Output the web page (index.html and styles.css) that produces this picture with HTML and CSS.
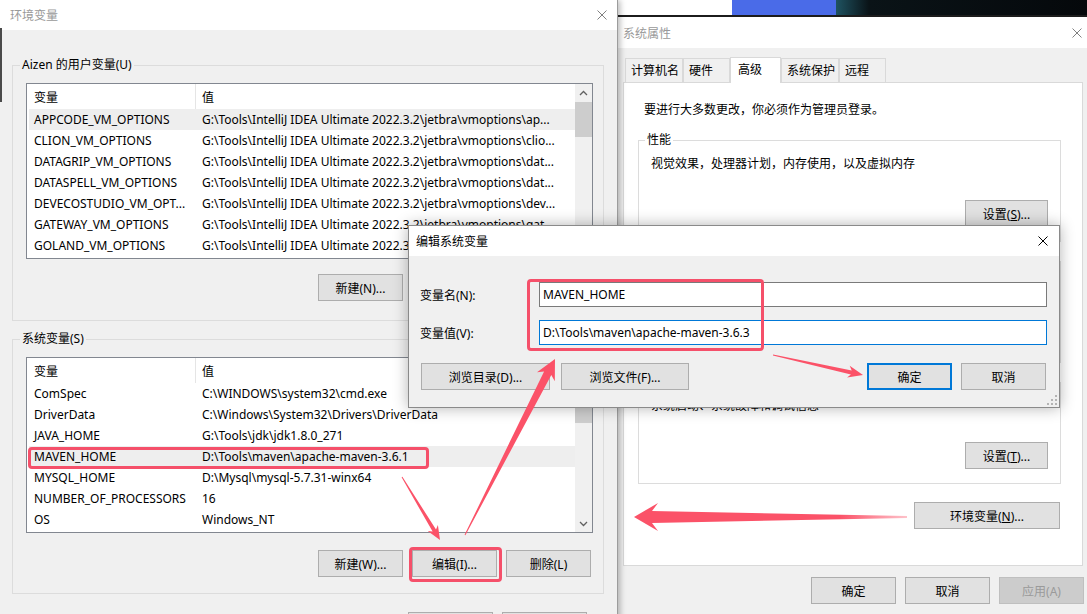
FILE: index.html
```html
<!DOCTYPE html>
<html lang="zh-CN">
  <head>
    <meta charset="UTF-8" />
    <title>环境变量</title>
    <link rel="stylesheet" href="styles.css">
  </head>
  <body>
    <div class="desk">
      <div class="wallpaper"></div>

      <!-- 环境变量 window (front, left) -->
      <section class="win env-win">
        <div class="titlebar">
          <span class="title">环境变量</span>
          <svg class="close" viewBox="0 0 10 10"><path d="M0.5 0.5L9.5 9.5M9.5 0.5L0.5 9.5" /></svg>
        </div>
        <div class="env-body">
          <div class="group user-group">
            <span class="group-title">Aizen 的用户变量(U)</span>
            <div class="varlist">
              <div class="vl-main">
                <div class="vl-head"><span class="c1">变量</span><span class="c2">值</span></div>
                <div class="vl-row sel"><span class="c1">APPCODE_VM_OPTIONS</span><span class="c2">G:\Tools\IntelliJ IDEA Ultimate 2022.3.2\jetbra\vmoptions\ap...</span></div>
                <div class="vl-row"><span class="c1">CLION_VM_OPTIONS</span><span class="c2">G:\Tools\IntelliJ IDEA Ultimate 2022.3.2\jetbra\vmoptions\clio...</span></div>
                <div class="vl-row"><span class="c1">DATAGRIP_VM_OPTIONS</span><span class="c2">G:\Tools\IntelliJ IDEA Ultimate 2022.3.2\jetbra\vmoptions\dat...</span></div>
                <div class="vl-row"><span class="c1">DATASPELL_VM_OPTIONS</span><span class="c2">G:\Tools\IntelliJ IDEA Ultimate 2022.3.2\jetbra\vmoptions\dat...</span></div>
                <div class="vl-row"><span class="c1">DEVECOSTUDIO_VM_OPT...</span><span class="c2">G:\Tools\IntelliJ IDEA Ultimate 2022.3.2\jetbra\vmoptions\dev...</span></div>
                <div class="vl-row"><span class="c1">GATEWAY_VM_OPTIONS</span><span class="c2">G:\Tools\IntelliJ IDEA Ultimate 2022.3.2\jetbra\vmoptions\gat...</span></div>
                <div class="vl-row"><span class="c1">GOLAND_VM_OPTIONS</span><span class="c2">G:\Tools\IntelliJ IDEA Ultimate 2022.3.2\jetbra\vmoptions\gol...</span></div>
              </div>
              <div class="scrollbar">
                <div class="sb-arrow"><svg width="9" height="6" viewBox="0 0 9 6"><polyline points="1,5 4.5,1.5 8,5" /></svg></div>
                <div class="thumb user-thumb"></div>
                <div class="sb-arrow sb-down"><svg width="9" height="6" viewBox="0 0 9 6"><polyline points="1,1 4.5,4.5 8,1" /></svg></div>
              </div>
            </div>
            <div class="btn-row">
              <button class="btn">新建(N)...</button>
              <button class="btn">编辑(E)...</button>
              <button class="btn">删除(D)</button>
            </div>
          </div>

          <div class="group sys-group">
            <span class="group-title">系统变量(S)</span>
            <div class="varlist">
              <div class="vl-main">
                <div class="vl-head"><span class="c1">变量</span><span class="c2">值</span></div>
                <div class="vl-row"><span class="c1">ComSpec</span><span class="c2">C:\WINDOWS\system32\cmd.exe</span></div>
                <div class="vl-row"><span class="c1">DriverData</span><span class="c2">C:\Windows\System32\Drivers\DriverData</span></div>
                <div class="vl-row"><span class="c1">JAVA_HOME</span><span class="c2">G:\Tools\jdk\jdk1.8.0_271</span></div>
                <div class="vl-row sel"><span class="c1">MAVEN_HOME</span><span class="c2">D:\Tools\maven\apache-maven-3.6.1</span></div>
                <div class="vl-row"><span class="c1">MYSQL_HOME</span><span class="c2">D:\Mysql\mysql-5.7.31-winx64</span></div>
                <div class="vl-row"><span class="c1">NUMBER_OF_PROCESSORS</span><span class="c2">16</span></div>
                <div class="vl-row"><span class="c1">OS</span><span class="c2">Windows_NT</span></div>
              </div>
              <div class="scrollbar">
                <div class="sb-arrow"><svg width="9" height="6" viewBox="0 0 9 6"><polyline points="1,5 4.5,1.5 8,5" /></svg></div>
                <div class="thumb sys-thumb"></div>
                <div class="sb-arrow sb-down"><svg width="9" height="6" viewBox="0 0 9 6"><polyline points="1,1 4.5,4.5 8,1" /></svg></div>
              </div>
            </div>
            <div class="btn-row">
              <button class="btn">新建(W)...</button>
              <button class="btn">编辑(I)...</button>
              <button class="btn">删除(L)</button>
            </div>
          </div>

          <div class="btn-row env-foot">
            <button class="btn">确定</button>
            <button class="btn">取消</button>
          </div>
        </div>
      </section>

      <!-- 系统属性 window (behind, right) -->
      <section class="win sys-win">
        <div class="titlebar">
          <span class="title">系统属性</span>
          <svg class="close" viewBox="0 0 10 10"><path d="M0.5 0.5L9.5 9.5M9.5 0.5L0.5 9.5" /></svg>
        </div>
        <div class="sys-body">
          <div class="tabs">
            <span class="tab">计算机名</span>
            <span class="tab">硬件</span>
            <span class="tab active">高级</span>
            <span class="tab">系统保护</span>
            <span class="tab">远程</span>
          </div>
          <div class="panel">
            <p class="note">要进行大多数更改，你必须作为管理员登录。</p>
            <div class="group pgroup">
              <span class="group-title">性能</span>
              <p class="gtext">视觉效果，处理器计划，内存使用，以及虚拟内存</p>
              <div class="btn-row"><button class="btn set-btn">设置(<u>S</u>)...</button></div>
            </div>
            <div class="group pgroup">
              <span class="group-title">用户配置文件</span>
              <p class="gtext">与登录帐户相关的桌面设置</p>
              <div class="btn-row"><button class="btn set-btn">设置(<u>E</u>)...</button></div>
            </div>
            <div class="group pgroup">
              <span class="group-title">启动和故障恢复</span>
              <p class="gtext">系统启动、系统故障和调试信息</p>
              <div class="btn-row"><button class="btn set-btn">设置(<u>T</u>)...</button></div>
            </div>
            <div class="btn-row env-row">
              <button class="btn env-btn">环境变量(<u>N</u>)...</button>
            </div>
          </div>
          <div class="btn-row sys-foot">
            <button class="btn">确定</button>
            <button class="btn">取消</button>
            <button class="btn" disabled>应用(A)</button>
          </div>
        </div>
      </section>

      <!-- 编辑系统变量 dialog (top) -->
      <section class="win edit-dlg">
        <div class="titlebar">
          <span class="title">编辑系统变量</span>
          <svg class="close" viewBox="0 0 10 10"><path d="M0.5 0.5L9.5 9.5M9.5 0.5L0.5 9.5" /></svg>
        </div>
        <div class="dlg-body">
          <div class="field">
            <label for="var_name">变量名(N):</label>
            <input type="text" id="var_name" value="MAVEN_HOME" readonly />
          </div>
          <div class="field">
            <label for="var_value">变量值(V):</label>
            <input type="text" id="var_value" class="focused" value="D:\Tools\maven\apache-maven-3.6.3" readonly />
          </div>
          <div class="dlg-btns">
            <button class="btn browse">浏览目录(D)...</button>
            <button class="btn browse">浏览文件(F)...</button>
            <button class="btn default">确定</button>
            <button class="btn">取消</button>
          </div>
        </div>
        <svg class="grip" width="10" height="10" viewBox="0 0 10 10">
          <rect x="8" y="0" width="2" height="2" /><rect x="8" y="4" width="2" height="2" /><rect x="4" y="4" width="2" height="2" />
          <rect x="8" y="8" width="2" height="2" /><rect x="4" y="8" width="2" height="2" /><rect x="0" y="8" width="2" height="2" />
        </svg>
      </section>

      <!-- red annotations -->
      <div class="mark mark-row"></div>
      <div class="mark mark-edit"></div>
      <div class="mark mark-inputs"></div>

      <svg class="arrows" width="1087" height="614" viewBox="0 0 1087 614">
        <defs>
          <linearGradient id="fade" gradientUnits="userSpaceOnUse" x1="907" y1="0" x2="840" y2="0">
            <stop offset="0" stop-color="#fb5268" stop-opacity="0.35" />
            <stop offset="1" stop-color="#fb5268" />
          </linearGradient>
        </defs>
        <polygon points="440,540 437.9,524.9 436,529.6 402.4,476.7 401.6,477.3 432.6,531.6 427.7,531.1" />
        <polygon points="555,359 554.8,381.3 551.3,375 465.4,535.2 464.6,534.8 544.1,371.4 537,372.3" />
        <polygon points="863,375 849.7,365.8 851.7,370.4 773.1,354.5 772.9,355.5 850.9,374.4 847.1,377.6" />
        <polygon fill="url(#fade)" points="634,517 658,503 652,511 907,516 907,518 652,523 658,531" />
      </svg>
    </div>
  </body>
</html>
```

FILE: styles.css
```css
/* a piece of the desktop with three overlapping windows */
* {
  box-sizing: border-box;
}

body {
  margin: 0;
  font-family: "Noto Sans", "Noto Sans CJK SC", sans-serif;
  font-size: 12px;
  color: #000;
  background: #06090c;
}

.desk {
  position: relative;
  width: 1087px;
  height: 614px;
  overflow: hidden;
}

.wallpaper {
  position: absolute;
  left: 617px;
  top: 0;
  width: 470px;
  height: 17px;
  background:
    linear-gradient(to bottom, transparent 15px, #1c1c1c 15px),
    linear-gradient(to right, #fff 0 115px, #4a6be8 115px 219px, #1f5361 219px, #0a1317 252px, #05080b);
}

/* windows */
.win {
  position: absolute;
  background: #f0f0f0;
}

.titlebar {
  display: flex;
  align-items: center;
  justify-content: space-between;
  background: #fff;
}

.title {
  color: #999;
}

.close {
  width: 10px;
  height: 10px;
  fill: none;
  stroke: #808080;
  stroke-width: 1;
}

button {
  font: inherit;
  color: #000;
}

.btn {
  height: 27px;
  width: 85px;
  padding: 0;
  border: 1px solid #adadad;
  background: #e1e1e1;
}

.btn:disabled {
  background: #cccccc;
  border-color: #bfbfbf;
  color: #9a9a9a;
}

.btn-row {
  display: flex;
  justify-content: flex-end;
  gap: 9px;
}

.group {
  border: 1px solid #dcdcdc;
}

.group-title {
  display: block;
  width: fit-content;
  margin: -9px 0 0 -6px;
  padding: 0 2px;
  line-height: 16px;
  background: #f0f0f0;
}

/* 环境变量 */
.env-win {
  left: 0;
  top: 0;
  width: 617px;
  height: 640px;
  z-index: 2;
  box-shadow: 1px 0 0 #9c9c9c, 3px 0 6px rgba(0, 0, 0, 0.28);
}

/* edge of something behind, peeking out on the left */
.env-win::before {
  content: "";
  position: absolute;
  left: 0;
  top: 28px;
  width: 2px;
  height: 74px;
  background: #4a4a4a;
}

.env-win .titlebar {
  height: 30px;
  padding: 0 10px;
}

.env-body {
  padding: 0 13px 0 12px;
}

.user-group {
  margin-top: 35px;
  padding: 0 10px 19px 13px;
}

.user-group .varlist {
  margin-top: 10px;
}

.user-group .btn-row {
  margin: 15px 2px 0 0;
}

.sys-group {
  margin-top: 18px;
  padding: 0 10px 16px 13px;
}

.sys-group .varlist {
  margin-top: 10px;
}

.sys-group .btn-row {
  margin: 17px 2px 0 0;
}

.env-foot {
  margin: 18px 17px 0 0;
}

.varlist {
  display: flex;
  height: 176px;
  border: 1px solid #828790;
  background: #fff;
}

.vl-main {
  flex: 1;
  overflow: hidden;
  padding-left: 2px;
}

.vl-head,
.vl-row {
  display: flex;
  align-items: center;
  white-space: nowrap;
}

.vl-head {
  height: 25px;
}

.vl-row {
  height: 21px;
}

.vl-row.sel {
  background: #eeeeee;
}

.c1 {
  flex: none;
  width: 167px;
  padding-left: 5px;
  overflow: hidden;
}

.c2 {
  flex: 1;
  padding-left: 6px;
  overflow: hidden;
}

.vl-head .c1 {
  height: 100%;
  display: flex;
  align-items: center;
  border-right: 1px solid #e5e5e5;
}

.scrollbar {
  flex: none;
  width: 17px;
  display: flex;
  flex-direction: column;
  background: #f0f0f0;
}

.sb-arrow {
  height: 17px;
  display: flex;
  align-items: center;
  justify-content: center;
}

.sb-arrow polyline {
  fill: none;
  stroke: #606060;
  stroke-width: 1.3;
}

.sb-down {
  margin-top: auto;
}

.thumb {
  background: #cdcdcd;
}

.user-thumb {
  margin-top: 1px;
  height: 35px;
}

.sys-thumb {
  margin-top: 21px;
  height: 27px;
}

/* 系统属性 */
.sys-win {
  left: 617px;
  top: 17px;
  width: 475px;
  height: 600px;
  z-index: 1;
}

.sys-win .titlebar {
  height: 31px;
  padding: 0 10px 0 6px;
}

.sys-body {
  padding: 10px 9px 0 6px;
}

.tabs {
  position: relative;
  z-index: 1;
  display: flex;
  align-items: flex-end;
  height: 24px;
  padding-left: 2px;
}

.tab {
  height: 24px;
  min-width: 47px;
  padding: 0 3px 0 5px;
  line-height: 24px;
  border: 1px solid #d9d9d9;
  border-bottom: none;
  background: #f0f0f0;
}

.tab.active {
  height: 26px;
  min-width: 51px;
  margin-bottom: -1px;
  padding-left: 7px;
  background: #fff;
}

.panel {
  height: 484px;
  padding-top: 19px;
  border: 1px solid #d9d9d9;
  background: #fff;
}

.note {
  margin: 0 0 0 20px;
  line-height: 16px;
}

.pgroup {
  height: 102px;
  margin: 19px 21px 0 14px;
  padding: 0 12px;
}

.pgroup:first-of-type {
  margin-top: 22px;
}

.pgroup .group-title {
  background: #fff;
}

.gtext {
  margin: 8px 0 0;
  line-height: 16px;
}

.pgroup .btn-row {
  margin-top: 28px;
}

.set-btn {
  width: 83px;
}

.env-row {
  margin: 18px 22px 0 0;
}

.env-btn {
  width: 146px;
}

.sys-foot {
  margin: 11px -1px 0 0;
}

/* 编辑系统变量 */
.edit-dlg {
  left: 408px;
  top: 225px;
  width: 652px;
  height: 183px;
  z-index: 3;
  border: 1px solid #8a8a8a;
  box-shadow: 0 0 14px rgba(0, 0, 0, 0.3);
}

.edit-dlg .titlebar {
  height: 30px;
  padding: 0 11px 0 7px;
}

.edit-dlg .title {
  color: #000;
}

.edit-dlg .close {
  stroke: #000;
}

.dlg-body {
  padding: 26px 12px 0 11px;
}

.field {
  display: flex;
  align-items: center;
  height: 25px;
}

.field + .field {
  margin-top: 13px;
}

.field label {
  flex: none;
  width: 119px;
}

.field input {
  flex: 1;
  height: 25px;
  padding: 0 3px;
  font: inherit;
  color: #000;
  border: 1px solid #7a7a7a;
  background: #fff;
  outline: none;
}

.field input.focused {
  border-color: #0078d7;
}

.dlg-btns {
  display: flex;
  gap: 9px;
  margin-top: 18px;
  padding: 0 1px;
}

.browse {
  width: 129px;
}

.browse + .browse {
  width: 128px;
  margin-left: 2px;
}

.default {
  margin-left: auto;
  border: 2px solid #0078d7;
}

.grip {
  position: absolute;
  right: 2px;
  bottom: 2px;
  fill: #b4b4b4;
}

/* red annotations */
.mark {
  position: absolute;
  z-index: 4;
  border: 3px solid #f5506a;
  border-radius: 4px;
}

.mark-row {
  left: 28px;
  top: 447px;
  width: 401px;
  height: 22px;
}

.mark-edit {
  left: 409px;
  top: 547px;
  width: 93px;
  height: 35px;
}

.mark-inputs {
  left: 527px;
  top: 279px;
  width: 237px;
  height: 72px;
}

.arrows {
  position: absolute;
  left: 0;
  top: 0;
  z-index: 5;
  fill: #fb5268;
}
```
